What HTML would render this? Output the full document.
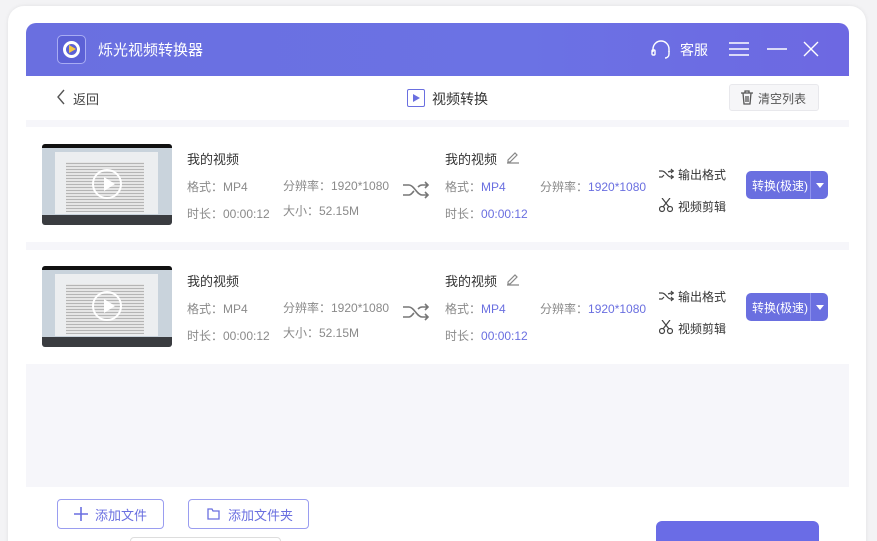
<!DOCTYPE html>
<html style="width:877px;height:541px;overflow:hidden"><head><meta charset="utf-8"><style>
*{margin:0;padding:0;box-sizing:border-box}
body{width:877px;height:541px;background:#f3f3f5;font-family:"Liberation Sans","Noto Sans CJK SC",sans-serif;position:relative;overflow:hidden;color:#333}
.card{position:absolute;left:8px;top:6px;width:858px;height:560px;background:#fff;border-radius:16px;box-shadow:0 0 4px rgba(0,0,0,.08)}
.hdr{position:absolute;left:26px;top:23px;width:823px;height:53px;background:linear-gradient(90deg,#6a6fe0,#6b72e4 60%,#6d68e2);border-radius:10px 10px 0 0;color:#fff}
.abs{position:absolute}
.gray{position:absolute;left:26px;width:823px;background:#f6f6fa}
.t{position:absolute;font-size:12px;color:#8a8a8a;white-space:nowrap}
.name{position:absolute;font-size:13px;color:#333;white-space:nowrap}
.blue{color:#6a6fe0}
.thumb{position:absolute;left:42px;width:130px;height:81px;background:#c9d3dc;border-radius:3px;overflow:hidden}
.thumb .top{position:absolute;left:0;top:0;width:100%;height:4px;background:#111}
.thumb .bot{position:absolute;left:0;bottom:0;width:100%;height:10px;background:#3a3c40}
.thumb .win{position:absolute;left:13px;top:8px;width:103px;height:62px;background:#eceef0}
.thumb .doc{position:absolute;left:24px;top:18px;width:78px;height:50px;background:repeating-linear-gradient(0deg,#b5b5b5 0 1px,#e6e6e6 1px 3px)}
.thumb .play{position:absolute;left:50px;top:25px;width:30px;height:30px;border:2px solid #fff;border-radius:50%}
.thumb .play:after{content:"";position:absolute;left:10px;top:6px;border-left:11px solid #fff;border-top:7px solid transparent;border-bottom:7px solid transparent}
.btn{position:absolute;left:746px;width:82px;height:28px;background:#6a6fe0;border-radius:5px;color:#fff;font-size:12px}
.btn span{position:absolute;left:6px;top:6px}
.btn i{position:absolute;left:64px;top:0;width:18px;height:28px;border-left:1px solid #8e92ec}
.btn i:after{content:"";position:absolute;left:5px;top:12px;border-top:5px solid #fff;border-left:4px solid transparent;border-right:4px solid transparent}
.ob{position:absolute;height:30px;border:1px solid #9a9df0;border-radius:4px;color:#6a6fe0;font-size:13px;background:#fff}
</style></head><body>
<div class="card"></div>
<div class="hdr">
 <div class="abs" style="left:31px;top:12px;width:29px;height:29px;border:1px solid #a8acf3;border-radius:5px;background:#5c61d6"></div>
 <div class="abs" style="left:37px;top:18px;width:17px;height:17px;border:3px solid #fff;border-radius:50%"></div>
 <div class="abs" style="left:43px;top:22px;border-left:7px solid #f5c842;border-top:4.5px solid transparent;border-bottom:4.5px solid transparent"></div>
 <div class="abs" style="left:72px;top:16px;font-size:15px">烁光视频转换器</div>
 <svg class="abs" style="left:624px;top:17px" width="22" height="20" viewBox="0 0 22 20" fill="none" stroke="#fff" stroke-width="1.4"><path d="M3 12V9a8 8 0 0 1 16 0v3"/><rect x="2" y="10" width="3" height="5" rx="1"/><path d="M19 11v3a4 4 0 0 1-4 4"/></svg>
 <div class="abs" style="left:654px;top:17px;font-size:14px">客服</div>
 <svg class="abs" style="left:703px;top:18px" width="20" height="16" stroke="#fff" stroke-width="1.4"><path d="M0 2h20M0 8h20M0 14h20"/></svg>
 <svg class="abs" style="left:741px;top:18px" width="20" height="16" stroke="#fff" stroke-width="1.4"><path d="M0 8h20"/></svg>
 <svg class="abs" style="left:777px;top:18px" width="16" height="16" stroke="#fff" stroke-width="1.4"><path d="M1 1l14 14M15 1L1 15"/></svg>
</div>
<svg class="abs" style="left:56px;top:89px" width="10" height="16" stroke="#555" stroke-width="1.4" fill="none"><path d="M8 1L2 8l6 7"/></svg>
<div class="abs" style="left:73px;top:89px;font-size:13px;color:#444">返回</div>
<div class="abs" style="left:407px;top:89px;width:18px;height:18px;border:1.5px solid #6a6fe0;border-radius:2px"></div>
<div class="abs" style="left:413px;top:94px;border-left:7px solid #6a6fe0;border-top:4px solid transparent;border-bottom:4px solid transparent"></div>
<div class="abs" style="left:432px;top:89px;font-size:14px;color:#333">视频转换</div>
<div class="abs" style="left:729px;top:84px;width:90px;height:27px;background:#f6f6f8;border:1px solid #e8e8ec;border-radius:3px"></div>
<svg class="abs" style="left:740px;top:90px" width="14" height="15" stroke="#555" stroke-width="1.3" fill="none"><path d="M1 3h12M5 3V1h4v2M3 3l1 11h6l1-11M6 6v6M8 6v6"/></svg>
<div class="abs" style="left:758px;top:90px;font-size:12px;color:#555">清空列表</div>
<div class="gray" style="top:120px;height:7px"></div>
<div class="gray" style="top:242px;height:8px"></div>
<div class="gray" style="top:364px;height:123px"></div>

<div class="thumb" style="top:144px"><div class="top"></div><div class="win"></div><div class="doc"></div><div class="bot"></div><div class="play"></div></div>
<div class="name" style="left:187px;top:149px">我的视频</div>
<div class="t" style="left:187px;top:178px">格式：MP4</div>
<div class="t" style="left:283px;top:177px">分辨率：1920*1080</div>
<div class="t" style="left:187px;top:205px">时长：00:00:12</div>
<div class="t" style="left:283px;top:202px">大小：52.15M</div>
<svg class="abs" style="left:402px;top:180px" width="28" height="20" fill="none" stroke="#777" stroke-width="1.6"><path d="M1 5h6c5 0 8 10 13 10h6M1 15h6c2 0 3-2 5-4M16 7c1-1 2-2 4-2h6M23 2l3 3-3 3M23 12l3 3-3 3"/></svg>
<div class="name" style="left:445px;top:149px">我的视频</div>
<svg class="abs" style="left:506px;top:150px" width="14" height="14" fill="none" stroke="#888" stroke-width="1.2"><path d="M2 10l7-7 2 2-7 7H2zM1 13h12"/></svg>
<div class="t" style="left:445px;top:178px">格式：<span class="blue">MP4</span></div>
<div class="t" style="left:540px;top:178px">分辨率：<span class="blue">1920*1080</span></div>
<div class="t" style="left:445px;top:205px">时长：<span class="blue">00:00:12</span></div>
<svg class="abs" style="left:659px;top:168px" width="15" height="12" fill="none" stroke="#444" stroke-width="1.2"><path d="M0 3h3c4 0 5 6 9 6h3M0 9h3l2-2M9 4l3-1h3M12 1l2 2-2 2M12 7l2 2-2 2"/></svg>
<div class="t" style="left:678px;top:166px;color:#333">输出格式</div>
<svg class="abs" style="left:659px;top:198px" width="14" height="15" fill="none" stroke="#444" stroke-width="1.2"><circle cx="3" cy="11" r="2.5"/><circle cx="11" cy="11" r="2.5"/><path d="M4 9L11 0M10 9L3 0"/></svg>
<div class="t" style="left:678px;top:198px;color:#333">视频剪辑</div>
<div class="btn" style="top:171px"><span>转换(极速)</span><i></i></div>

<div class="thumb" style="top:266px"><div class="top"></div><div class="win"></div><div class="doc"></div><div class="bot"></div><div class="play"></div></div>
<div class="name" style="left:187px;top:271px">我的视频</div>
<div class="t" style="left:187px;top:300px">格式：MP4</div>
<div class="t" style="left:283px;top:299px">分辨率：1920*1080</div>
<div class="t" style="left:187px;top:327px">时长：00:00:12</div>
<div class="t" style="left:283px;top:324px">大小：52.15M</div>
<svg class="abs" style="left:402px;top:302px" width="28" height="20" fill="none" stroke="#777" stroke-width="1.6"><path d="M1 5h6c5 0 8 10 13 10h6M1 15h6c2 0 3-2 5-4M16 7c1-1 2-2 4-2h6M23 2l3 3-3 3M23 12l3 3-3 3"/></svg>
<div class="name" style="left:445px;top:271px">我的视频</div>
<svg class="abs" style="left:506px;top:272px" width="14" height="14" fill="none" stroke="#888" stroke-width="1.2"><path d="M2 10l7-7 2 2-7 7H2zM1 13h12"/></svg>
<div class="t" style="left:445px;top:300px">格式：<span class="blue">MP4</span></div>
<div class="t" style="left:540px;top:300px">分辨率：<span class="blue">1920*1080</span></div>
<div class="t" style="left:445px;top:327px">时长：<span class="blue">00:00:12</span></div>
<svg class="abs" style="left:659px;top:290px" width="15" height="12" fill="none" stroke="#444" stroke-width="1.2"><path d="M0 3h3c4 0 5 6 9 6h3M0 9h3l2-2M9 4l3-1h3M12 1l2 2-2 2M12 7l2 2-2 2"/></svg>
<div class="t" style="left:678px;top:288px;color:#333">输出格式</div>
<svg class="abs" style="left:659px;top:320px" width="14" height="15" fill="none" stroke="#444" stroke-width="1.2"><circle cx="3" cy="11" r="2.5"/><circle cx="11" cy="11" r="2.5"/><path d="M4 9L11 0M10 9L3 0"/></svg>
<div class="t" style="left:678px;top:320px;color:#333">视频剪辑</div>
<div class="btn" style="top:293px"><span>转换(极速)</span><i></i></div>

<div class="ob" style="left:57px;top:499px;width:107px"><svg class="abs" style="left:16px;top:7px" width="14" height="14" stroke="#6a6fe0" stroke-width="1.6"><path d="M7 0v14M0 7h14"/></svg><span class="abs" style="left:37px;top:5px">添加文件</span></div>
<div class="ob" style="left:188px;top:499px;width:121px"><svg class="abs" style="left:18px;top:8px" width="13" height="12" fill="none" stroke="#6a6fe0" stroke-width="1.3"><path d="M1 1h4l1 2h6v8H1z"/></svg><span class="abs" style="left:39px;top:5px">添加文件夹</span></div>
<div class="abs" style="left:130px;top:537px;width:151px;height:10px;border:1px solid #ddd;border-radius:4px"></div>
<div class="abs" style="left:656px;top:521px;width:163px;height:30px;background:#6a6ce6;border-radius:6px"></div>
</body></html>
